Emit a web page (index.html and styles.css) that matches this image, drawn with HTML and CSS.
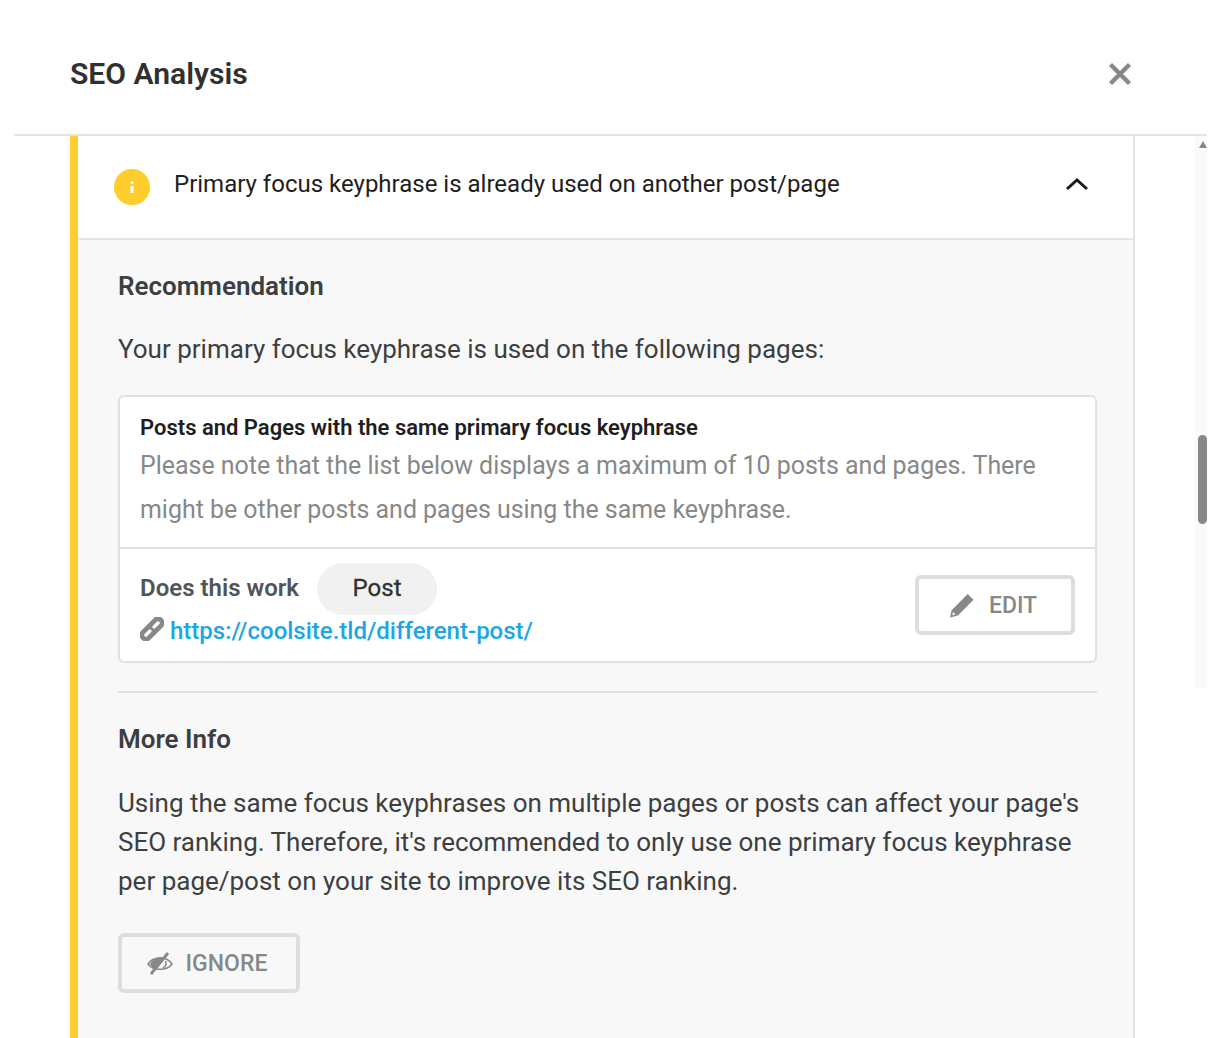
FILE: index.html
```html
<!DOCTYPE html>
<html lang="en">

<head>
    <meta charset="UTF-8">
    <meta name="viewport" content="width=device-width, initial-scale=1.0">
    <title>SEO Analysis</title>
    <link rel="stylesheet" href="styles.css">
</head>

<body>
    <div class="modal">
        <header class="modal-header">
            <h1>SEO Analysis</h1>
            <svg class="close-icon" viewBox="0 0 24 24" width="24" height="24">
                <path d="M2.5 2.5 L21.5 21.5 M21.5 2.5 L2.5 21.5" stroke="#888" stroke-width="4.4" fill="none" />
            </svg>
        </header>

        <div class="modal-body">
            <section class="check-card">
                <div class="check-head">
                    <span class="info-badge">
                        <svg viewBox="0 0 4 12" width="4" height="12">
                            <rect x="0.5" y="0" width="3" height="3" rx="1.5" fill="#fff" />
                            <rect x="0.5" y="5" width="3" height="7" fill="#fff" />
                        </svg>
                    </span>
                    <span class="check-title">Primary focus keyphrase is already used on another post/page</span>
                    <svg class="chevron" viewBox="0 0 24 14" width="24" height="14">
                        <path d="M2 12 L12 3 L22 12" stroke="#1a1a1a" stroke-width="3" fill="none" />
                    </svg>
                </div>

                <div class="check-body">
                    <h2>Recommendation</h2>
                    <p class="lead">Your primary focus keyphrase is used on the following pages:</p>

                    <div class="pages-box">
                        <div class="pages-intro">
                            <h3>Posts and Pages with the same primary focus keyphrase</h3>
                            <p>Please note that the list below displays a maximum of 10 posts and pages. There might be other posts and pages using the same keyphrase.</p>
                        </div>
                        <div class="page-row">
                            <div class="page-info">
                                <div class="page-name">
                                    <strong>Does this work</strong>
                                    <span class="pill"><span class="pill-text">Post</span></span>
                                </div>
                                <div class="page-link">
                                    <svg viewBox="0 0 24 24" width="24" height="24">
                                        <g transform="rotate(-45 12 12)">
                                            <path fill="#888" fill-rule="evenodd" d="M3.5 5.5 H20.5 A6.5 6.5 0 0 1 20.5 18.5 H3.5 A6.5 6.5 0 0 1 3.5 5.5 Z M3.5 10.3 A1.7 1.7 0 0 0 3.500 13.7 H9 A1.7 1.7 0 0 0 9 10.3 Z M15 10.3 A1.7 1.7 0 0 0 15 13.7 H20.5 A1.7 1.7 0 0 0 20.5 10.3 Z" />
                                        </g>
                                    </svg>
                                    <a href="#">https://coolsite.tld/different-post/</a>
                                </div>
                            </div>
                            <button class="outline-btn edit-btn">
                                <svg viewBox="0 0 24 24" width="25" height="25">
                                    <path fill="#888" fill-rule="evenodd" d="M18 1 L23.5 6.5 L8.5 21.5 L1 23.5 L2.5 16.5 Z M3.8 18.2 L3.2 21.3 L6.3 20.6 Z" />
                                </svg>
                                EDIT
                            </button>
                        </div>
                    </div>

                    <hr>

                    <h2>More Info</h2>
                    <p class="info-text">Using the same focus keyphrases on multiple pages or posts can affect your page's SEO ranking. Therefore, it's recommended to only use one primary focus keyphrase per page/post on your site to improve its SEO ranking.</p>

                    <button class="outline-btn ignore-btn">
                        <svg viewBox="0 0 26 24" width="26" height="24">
                            <path d="M1 13 C6 5 20 5 25 13 C20 20 6 20 1 13 Z" fill="none" stroke="#888" stroke-width="1.5" />
                            <path d="M3 13 C6 7 12 5.500 18 6.500 L8 19 C6 17 4 15 3 13 Z" fill="#888" />
                            <path d="M16 17 C19 15 19.500 12 18.500 10" fill="none" stroke="#888" stroke-width="1.5" />
                            <path d="M4 23 L21 2" stroke="#888" stroke-width="2.8" />
                        </svg>
                        IGNORE
                    </button>
                </div>
            </section>

            <!-- Scrollbar -->
            <div class="scroll-track">
                <span class="scroll-arrow"></span>
                <span class="scroll-thumb"></span>
            </div>
        </div>
    </div>
</body>

</html>
```

FILE: styles.css
```css
* {
    box-sizing: border-box;
    margin: 0;
    padding: 0;
    font-family: Roboto, sans-serif;
}

html,
body {
    height: 1038px;
    overflow: hidden;
    background-color: #fff;
}

.modal {
    margin: 0 13px 0 14px;
    height: 1038px;
    display: flex;
    flex-direction: column;
}

.modal-header {
    height: 136px;
    padding: 12px 75px 0 56px;
    display: flex;
    align-items: center;
    justify-content: space-between;
    border-bottom: 2px solid #e5e5e5;
    flex-shrink: 0;
}

.modal-header h1 {
    font-size: 30.1px;
    font-weight: 600;
    color: #303030;
}

.close-icon {
    margin-top: 2px;
}

.modal-body {
    flex: 1;
    display: flex;
    justify-content: space-between;
    padding-left: 56px;
    min-height: 0;
}

.check-card {
    width: 1065px;
    border-left: 8px solid #ffcd2e;
    border-right: 2px solid #e5e5e5;
}

.check-head {
    height: 104px;
    padding: 0 44px 0 36px;
    display: flex;
    align-items: center;
    background-color: #fff;
    border-bottom: 2px solid #e5e5e5;
}

.info-badge {
    width: 36px;
    height: 36px;
    border-radius: 50%;
    background-color: #ffcd2e;
    display: flex;
    align-items: center;
    justify-content: center;
    flex-shrink: 0;
}

.check-title {
    flex: 1;
    margin-left: 24px;
    margin-top: -7px;
    font-size: 24px;
    color: #1e1e1e;
}

.chevron {
    margin-top: -7px;
}

.check-body {
    height: 798px;
    background-color: #f8f8f8;
    padding: 28px 36px 0 40px;
}

.check-body h2 {
    font-size: 26px;
    font-weight: 600;
    line-height: 36px;
    color: #3c3f42;
}

.lead {
    margin-top: 27px;
    font-size: 26px;
    line-height: 36px;
    color: #3c3f42;
}

.pages-box {
    margin-top: 28px;
    background-color: #fff;
    border: 2px solid #e0e0e0;
    border-radius: 6px;
}

.pages-intro {
    padding: 16px 20px 15px 20px;
    border-bottom: 2px solid #e0e0e0;
}

.pages-intro h3 {
    font-size: 22px;
    font-weight: 600;
    line-height: 30px;
    color: #1e1e1e;
}

.pages-intro p {
    margin-top: 1px;
    font-size: 24.93px;
    line-height: 44px;
    color: #888;
}

.page-row {
    padding: 14px 20px 14px 20px;
    display: flex;
    align-items: center;
    justify-content: space-between;
}

.page-name {
    display: flex;
    align-items: center;
    gap: 18px;
}

.page-name strong {
    margin-top: -2px;
    font-size: 24px;
    font-weight: 600;
    color: #50555a;
}

.pill {
    width: 120px;
    height: 52px;
    border-radius: 26px;
    background-color: #f1f1f1;
    display: flex;
    align-items: center;
    justify-content: center;
}

.pill-text {
    margin-top: -2px;
    font-size: 24px;
    color: #303030;
    -webkit-text-stroke: 0.3px #303030;
}

.page-link {
    display: flex;
    align-items: center;
    gap: 6px;
}

.page-link svg {
    margin-top: -5px;
}

.page-link a {
    font-size: 24px;
    line-height: 32px;
    font-weight: 500;
    color: #1ba6e6;
    text-decoration: none;
}

.outline-btn {
    display: flex;
    align-items: center;
    justify-content: center;
    height: 60px;
    padding-right: 4px;
    background: transparent;
    border: 4px solid #dedede;
    border-radius: 6px;
    font-size: 23px;
    font-weight: 500;
    color: #888;
    cursor: pointer;
}

.edit-btn {
    width: 160px;
    gap: 15px;
}

.ignore-btn {
    width: 182px;
    gap: 13px;
    margin-top: 32px;
}

hr {
    border: none;
    border-top: 2px solid #e0e0e0;
    margin: 28px 0 28px;
}

.info-text {
    margin-top: 27px;
    font-size: 26px;
    line-height: 39px;
    color: #3c3f42;
}

.scroll-track {
    width: 12px;
    height: 552px;
    background-color: #fafafa;
    display: flex;
    flex-direction: column;
    align-items: flex-end;
}

.scroll-arrow {
    width: 0;
    height: 0;
    margin-top: 5px;
    border-left: 4.5px solid transparent;
    border-right: 4.5px solid transparent;
    border-bottom: 7px solid #888;
}

.scroll-thumb {
    width: 9px;
    height: 89px;
    margin-top: 287px;
    border-radius: 5px;
    background-color: #888;
}
```
